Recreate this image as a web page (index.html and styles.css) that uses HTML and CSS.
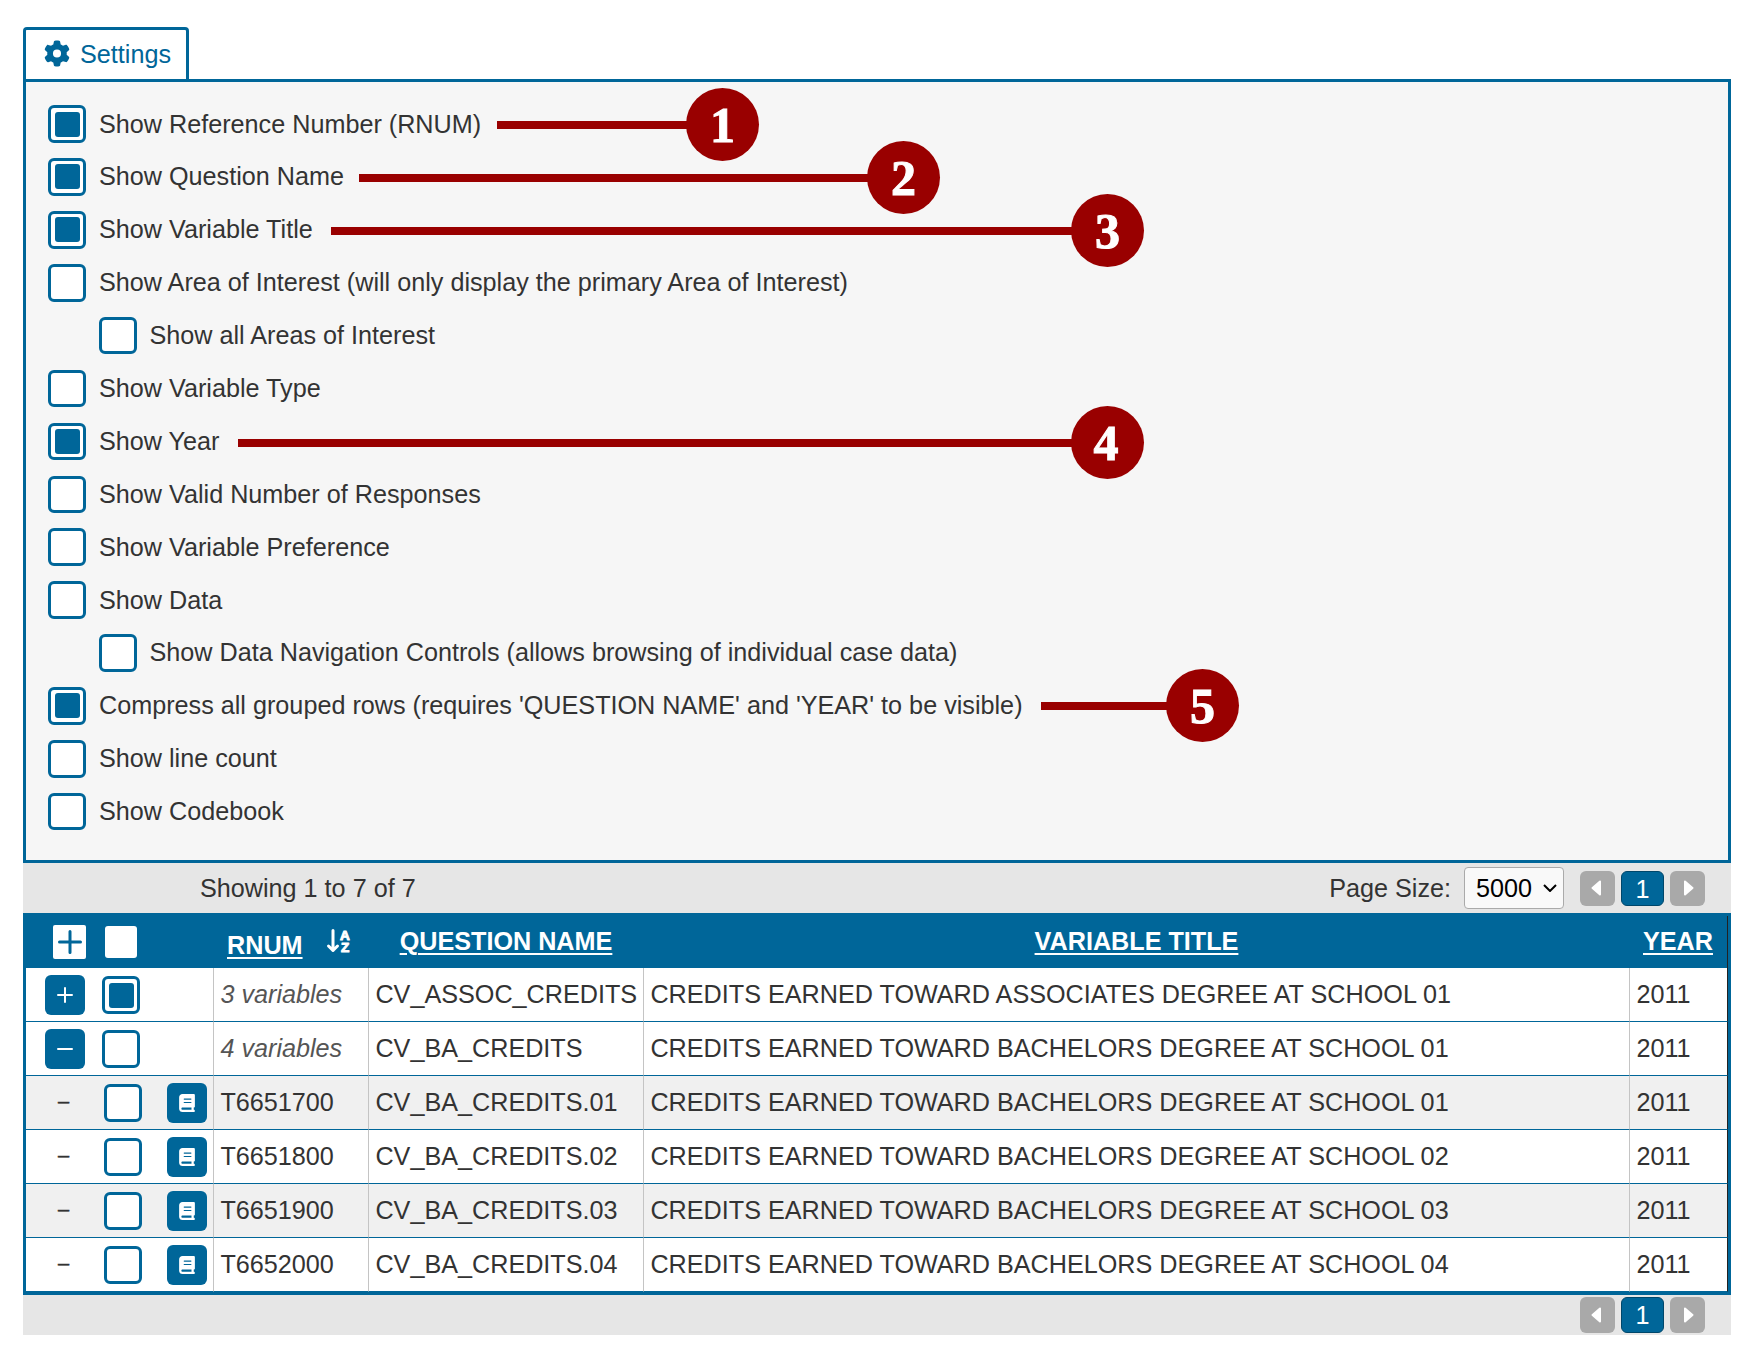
FILE: index.html
```html
<!DOCTYPE html>
<html lang="en">
<head>
    <meta charset="UTF-8">
    <meta name="viewport" content="width=device-width, initial-scale=1.0">
    <title>Variable Settings</title>
    <link rel="stylesheet" href="styles.css">
</head>
<body>
    <!-- Shared icons -->
    <svg class="icon-defs" width="0" height="0">
        <symbol id="icon-gear" viewBox="0 0 512 512">
            <path d="M495.9 166.6c3.2 8.7 .5 18.4-6.4 24.6l-43.3 39.4c1.1 8.3 1.7 16.8 1.7 25.4s-.6 17.1-1.7 25.4l43.3 39.4c6.9 6.2 9.6 15.9 6.4 24.6c-4.4 11.9-9.7 23.3-15.8 34.3l-4.7 8.1c-6.6 11-14 21.4-22.1 31.2c-5.9 7.2-15.7 9.6-24.5 6.8l-55.7-17.7c-13.4 10.3-28.2 18.9-44 25.4l-12.5 57.1c-2 9.1-9 16.3-18.2 17.8c-13.8 2.3-28 3.5-42.5 3.5s-28.7-1.2-42.5-3.5c-9.2-1.5-16.2-8.7-18.2-17.8l-12.5-57.1c-15.8-6.5-30.6-15.1-44-25.4L83.1 425.9c-8.8 2.8-18.6 .3-24.5-6.8c-8.1-9.8-15.5-20.2-22.1-31.2l-4.7-8.1c-6.1-11-11.4-22.4-15.8-34.3c-3.2-8.7-.5-18.4 6.4-24.6l43.3-39.4C64.6 273.1 64 264.6 64 256s.6-17.1 1.7-25.4L22.4 191.2c-6.9-6.2-9.6-15.9-6.4-24.6c4.4-11.9 9.7-23.3 15.8-34.3l4.7-8.1c6.6-11 14-21.4 22.1-31.2c5.9-7.2 15.7-9.6 24.5-6.8l55.7 17.7c13.4-10.3 28.2-18.9 44-25.4l12.5-57.1c2-9.1 9-16.3 18.2-17.8C227.3 1.2 241.5 0 256 0s28.7 1.2 42.5 3.5c9.2 1.5 16.2 8.7 18.2 17.8l12.5 57.1c15.8 6.5 30.6 15.1 44 25.4l55.7-17.7c8.8-2.8 18.6-.3 24.5 6.8c8.1 9.8 15.5 20.2 22.1 31.2l4.7 8.1c6.1 11 11.4 22.4 15.8 34.3zM256 336a80 80 0 1 0 0-160 80 80 0 1 0 0 160z"/>
        </symbol>
        <symbol id="icon-book" viewBox="0 0 448 512">
            <path d="M96 0C43 0 0 43 0 96V416c0 53 43 96 96 96H384h32c17.7 0 32-14.3 32-32s-14.3-32-32-32V384c17.7 0 32-14.3 32-32V32c0-17.7-14.3-32-32-32H384 96zm0 384H352v64H96c-17.7 0-32-14.3-32-32s14.3-32 32-32zm32-240c0-8.8 7.2-16 16-16H336c8.8 0 16 7.2 16 16s-7.2 16-16 16H144c-8.8 0-16-7.2-16-16zm16 80H336c8.8 0 16 7.2 16 16s-7.2 16-16 16H144c-8.8 0-16-7.2-16-16s7.2-16 16-16z"/>
        </symbol>
        <symbol id="icon-plus" viewBox="0 0 16 16">
            <path d="M8 1v14M1 8h14"/>
        </symbol>
        <symbol id="icon-minus" viewBox="0 0 16 16">
            <path d="M1 8h14"/>
        </symbol>
        <symbol id="icon-prev" viewBox="0 0 10 16">
            <path d="M9 1.5v13L1.5 8z"/>
        </symbol>
        <symbol id="icon-next" viewBox="0 0 10 16">
            <path d="M1 1.5v13L8.5 8z"/>
        </symbol>
    </svg>

    <div class="container">
        <div class="tab"><svg class="gear"><use href="#icon-gear"/></svg>Settings</div>

        <div class="settings">
            <label class="option"><input type="checkbox" class="check" checked>Show Reference Number (RNUM)</label>
            <label class="option"><input type="checkbox" class="check" checked>Show Question Name</label>
            <label class="option"><input type="checkbox" class="check" checked>Show Variable Title</label>
            <label class="option"><input type="checkbox" class="check">Show Area of Interest (will only display the primary Area of Interest)</label>
            <label class="option sub"><input type="checkbox" class="check">Show all Areas of Interest</label>
            <label class="option"><input type="checkbox" class="check">Show Variable Type</label>
            <label class="option"><input type="checkbox" class="check" checked>Show Year</label>
            <label class="option"><input type="checkbox" class="check">Show Valid Number of Responses</label>
            <label class="option"><input type="checkbox" class="check">Show Variable Preference</label>
            <label class="option"><input type="checkbox" class="check">Show Data</label>
            <label class="option sub"><input type="checkbox" class="check">Show Data Navigation Controls (allows browsing of individual case data)</label>
            <label class="option"><input type="checkbox" class="check" checked>Compress all grouped rows (requires 'QUESTION NAME' and 'YEAR' to be visible)</label>
            <label class="option"><input type="checkbox" class="check">Show line count</label>
            <label class="option"><input type="checkbox" class="check">Show Codebook</label>

            <!-- Numbered callouts over the options -->
            <div class="callout callout-1"><span>1</span></div>
            <div class="callout callout-2"><span>2</span></div>
            <div class="callout callout-3"><span>3</span></div>
            <div class="callout callout-4"><span>4</span></div>
            <div class="callout callout-5"><span>5</span></div>
        </div>

        <div class="toolbar">
            <span class="showing">Showing 1 to 7 of 7</span>
            <label class="page-size" for="pageSize">Page Size:</label>
            <div class="select-box">
                <select id="pageSize">
                    <option>5000</option>
                </select>
                <svg class="chevron" viewBox="0 0 14 8"><path d="M1 1l6 6 6-6"/></svg>
            </div>
            <div class="pager">
                <button type="button" class="arrow prev"><svg><use href="#icon-prev"/></svg></button>
                <button type="button" class="current">1</button>
                <button type="button" class="arrow next"><svg><use href="#icon-next"/></svg></button>
            </div>
        </div>

        <div class="table-wrap">
            <table class="variables">
                <colgroup>
                    <col class="col-tools">
                    <col class="col-rnum">
                    <col class="col-question">
                    <col class="col-title">
                    <col class="col-year">
                </colgroup>
                <thead>
                    <tr>
                        <th>
                            <div class="tools head-tools">
                                <button type="button" class="expand-all"><svg><use href="#icon-plus"/></svg></button>
                                <input type="checkbox" class="check-all">
                            </div>
                        </th>
                        <th>
                            <div class="rnum-head">
                                <a>RNUM</a>
                                <svg class="sort" viewBox="0 0 24 24">
                                    <path d="M6 1.5v20M1.5 17L6 21.5l4.5-4.5"/>
                                    <text x="13" y="10.5">A</text>
                                    <text x="14" y="22.5">Z</text>
                                </svg>
                            </div>
                        </th>
                        <th><a>QUESTION NAME</a></th>
                        <th><a>VARIABLE TITLE</a></th>
                        <th><a>YEAR</a></th>
                    </tr>
                </thead>
                <tbody>
                    <tr>
                        <td><div class="tools"><button type="button" class="tool"><svg><use href="#icon-plus"/></svg></button><input type="checkbox" class="check" checked></div></td>
                        <td class="count">3 variables</td>
                        <td>CV_ASSOC_CREDITS</td>
                        <td>CREDITS EARNED TOWARD ASSOCIATES DEGREE AT SCHOOL 01</td>
                        <td>2011</td>
                    </tr>
                    <tr>
                        <td><div class="tools"><button type="button" class="tool"><svg><use href="#icon-minus"/></svg></button><input type="checkbox" class="check"></div></td>
                        <td class="count">4 variables</td>
                        <td>CV_BA_CREDITS</td>
                        <td>CREDITS EARNED TOWARD BACHELORS DEGREE AT SCHOOL 01</td>
                        <td>2011</td>
                    </tr>
                    <tr class="odd">
                        <td><div class="tools child"><span class="dash">–</span><input type="checkbox" class="check"><button type="button" class="tool book"><svg><use href="#icon-book"/></svg></button></div></td>
                        <td>T6651700</td>
                        <td>CV_BA_CREDITS.01</td>
                        <td>CREDITS EARNED TOWARD BACHELORS DEGREE AT SCHOOL 01</td>
                        <td>2011</td>
                    </tr>
                    <tr>
                        <td><div class="tools child"><span class="dash">–</span><input type="checkbox" class="check"><button type="button" class="tool book"><svg><use href="#icon-book"/></svg></button></div></td>
                        <td>T6651800</td>
                        <td>CV_BA_CREDITS.02</td>
                        <td>CREDITS EARNED TOWARD BACHELORS DEGREE AT SCHOOL 02</td>
                        <td>2011</td>
                    </tr>
                    <tr class="odd">
                        <td><div class="tools child"><span class="dash">–</span><input type="checkbox" class="check"><button type="button" class="tool book"><svg><use href="#icon-book"/></svg></button></div></td>
                        <td>T6651900</td>
                        <td>CV_BA_CREDITS.03</td>
                        <td>CREDITS EARNED TOWARD BACHELORS DEGREE AT SCHOOL 03</td>
                        <td>2011</td>
                    </tr>
                    <tr>
                        <td><div class="tools child"><span class="dash">–</span><input type="checkbox" class="check"><button type="button" class="tool book"><svg><use href="#icon-book"/></svg></button></div></td>
                        <td>T6652000</td>
                        <td>CV_BA_CREDITS.04</td>
                        <td>CREDITS EARNED TOWARD BACHELORS DEGREE AT SCHOOL 04</td>
                        <td>2011</td>
                    </tr>
                </tbody>
            </table>
        </div>

        <div class="toolbar toolbar-bottom">
            <div class="pager">
                <button type="button" class="arrow prev"><svg><use href="#icon-prev"/></svg></button>
                <button type="button" class="current">1</button>
                <button type="button" class="arrow next"><svg><use href="#icon-next"/></svg></button>
            </div>
        </div>
    </div>
</body>
</html>
```
FILE: styles.css
```css
* {
    box-sizing: border-box;
}

body {
    margin: 0;
    background: #fff;
    color: #333;
    font-family: "Liberation Sans", Arial, sans-serif;
    font-size: 25.2px;
}

button,
select,
input {
    appearance: none;
    margin: 0;
    padding: 0;
    font: inherit;
}

.icon-defs {
    position: absolute;
}

.container {
    width: 1708px;
    margin: 27px 0 0 23px;
}

/* Settings tab and panel */
.tab {
    display: flex;
    align-items: center;
    width: 166px;
    height: 52px;
    padding: 0 0 0 18px;
    border: 3px solid #069;
    border-bottom: none;
    border-radius: 4px 4px 0 0;
    color: #069;
}

.gear {
    width: 26px;
    height: 27px;
    margin: -3px 10px 0 0;
    fill: currentColor;
}

.settings {
    position: relative;
    height: 784px;
    padding: 15.65px 0 0 22px;
    border: 3px solid #069;
    background: #f6f6f6;
}

.option {
    display: flex;
    align-items: center;
    height: 52.9px;
    white-space: nowrap;
}

.option .check {
    height: 37.5px;
    margin-right: 13px;
}

.option.sub {
    padding-left: 51px;
}

.option.sub .check {
    margin-right: 12.5px;
}

.check {
    display: flex;
    align-items: center;
    justify-content: center;
    flex: none;
    width: 38px;
    height: 38px;
    border: 3px solid #069;
    border-radius: 6px;
    background: #fff;
}

.check:checked::before {
    content: "";
    width: 25px;
    height: 25px;
    border-radius: 3px;
    background: #069;
}

/* Callouts */
.callout {
    position: absolute;
    display: flex;
    align-items: center;
    justify-content: flex-end;
    height: 73px;
    background: linear-gradient(#900, #900) left 33px / calc(100% - 36px) 8px no-repeat;
}

.callout span {
    width: 73px;
    height: 73px;
    border-radius: 50%;
    background: #900;
    color: #fff;
    font: bold 50px/74px "Liberation Serif", serif;
    text-align: center;
    -webkit-text-stroke: 1px #fff;
}

.callout-1 {
    left: 471px;
    top: 6px;
    width: 262px;
}

.callout-2 {
    left: 333px;
    top: 59px;
    width: 581px;
}

.callout-3 {
    left: 305px;
    top: 112px;
    width: 813px;
}

.callout-4 {
    left: 212px;
    top: 324px;
    width: 906px;
}

.callout-4 span {
    padding-right: 3px;
}

.callout-5 {
    left: 1015px;
    top: 587px;
    width: 198px;
}

/* Toolbars */
.toolbar {
    display: flex;
    align-items: center;
    height: 50px;
    padding: 0 26px 0 177px;
    background: #e6e6e6;
}

.toolbar-bottom {
    height: 40px;
    justify-content: flex-end;
}

.page-size {
    margin: 0 13px 0 auto;
}

.select-box {
    position: relative;
}

.select-box select {
    display: block;
    width: 100px;
    height: 42px;
    padding-left: 11px;
    border: 1px solid #aaa;
    border-radius: 4px;
    background: #f9f9f9;
    color: #000;
}

.chevron {
    position: absolute;
    right: 7px;
    top: 17px;
    width: 14px;
    height: 8px;
    fill: none;
    stroke: #000;
    stroke-width: 2;
}

.pager {
    display: flex;
    gap: 6px;
    margin-left: 16px;
}

.pager button {
    display: flex;
    align-items: center;
    justify-content: center;
    height: 35px;
    border: none;
    border-radius: 6px;
    color: #fff;
}

.pager .arrow {
    width: 35px;
    background: #a9a9a9;
}

.pager .prev {
    padding-right: 3px;
}

.pager .next {
    padding-left: 3px;
}

.pager .current {
    width: 43px;
    padding-top: 3px;
    border: 1px solid #00476b;
    background: #069;
}

.toolbar-bottom .pager button {
    height: 36px;
}

.toolbar-bottom .pager .current {
    padding-top: 1px;
}

.pager svg {
    width: 10px;
    height: 16px;
    fill: #fff;
    stroke: #fff;
    stroke-width: 2;
    stroke-linejoin: round;
}

/* Variables table */
.table-wrap {
    border: 3px solid #069;
}

.variables {
    width: 1702px;
    table-layout: fixed;
    border-collapse: separate;
    border-spacing: 0;
}

.col-tools {
    width: 188px;
}

.col-rnum {
    width: 155px;
}

.col-question {
    width: 275px;
}

.col-title {
    width: 986px;
}

.col-year {
    width: 98px;
}

.variables th {
    height: 52px;
    padding: 0 1px 2px 0;
    background: #069;
    color: #fff;
}

.variables th a {
    text-decoration: underline;
    text-decoration-thickness: 2px;
    text-underline-offset: 3px;
}

.variables td {
    height: 54px;
    padding: 0 0 0 6.4px;
    border-right: 1px solid #c4c4c4;
    border-bottom: 1px solid #069;
    white-space: nowrap;
}

.variables td:first-child {
    padding-left: 0;
}

.variables th:last-child,
.variables td:last-child {
    border-right: 1px solid #222;
}

.variables .odd {
    background: #f0f0f0;
}

.variables .count {
    color: #555;
    font-style: italic;
}

.tools {
    display: flex;
    align-items: center;
    gap: 17px;
    padding: 1px 0 0 19px;
}

.tool {
    display: flex;
    align-items: center;
    justify-content: center;
    width: 40px;
    height: 40px;
    border: none;
    border-radius: 6px;
    background: #069;
}

.tool svg {
    width: 16px;
    height: 16px;
    fill: none;
    stroke: #fff;
    stroke-width: 2;
    stroke-linecap: round;
}

.tool.book svg {
    width: 16px;
    height: 18px;
    fill: #fff;
    stroke: none;
}

.child {
    gap: 25px;
}

.dash {
    width: 34px;
    padding: 0 0 4px 3px;
    font-size: 20px;
    text-align: center;
    -webkit-text-stroke: 0.5px #333;
}

.head-tools {
    gap: 19px;
    padding: 2px 0 0 27px;
}

.expand-all {
    display: flex;
    align-items: center;
    justify-content: center;
    width: 33px;
    height: 34px;
    border: none;
    border-radius: 2px;
    background: #fff;
}

.expand-all svg {
    width: 24px;
    height: 24px;
    fill: none;
    stroke: #069;
    stroke-width: 2;
    stroke-linecap: round;
}

.check-all {
    width: 32px;
    height: 32px;
    border-radius: 3px;
    background: #fff;
}

.rnum-head {
    display: flex;
    align-items: center;
    padding: 9px 0 0 13px;
}

.sort {
    overflow: visible;
    width: 24px;
    height: 24px;
    margin: -10px 0 0 24px;
    fill: none;
    stroke: #fff;
    stroke-width: 3;
    stroke-linecap: round;
    stroke-linejoin: round;
}

.sort text {
    fill: #fff;
    stroke-width: 1;
    font: bold 13.5px "Liberation Sans", Arial, sans-serif;
}
```
